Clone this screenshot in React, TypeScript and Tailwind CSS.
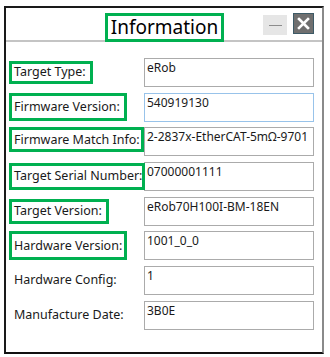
const font = { fontFamily: '"Noto Sans", "Open Sans", Arial, sans-serif' };

type Row = {
  label: string;
  value: string;
  box?: { w: number; h: number; dy?: number };
  focus?: boolean;
};

const rows: Row[] = [
  { label: "Target Type:", value: "eRob", box: { w: 84, h: 23 } },
  { label: "Firmware Version:", value: "540919130", box: { w: 118, h: 28 }, focus: true },
  { label: "Firmware Match Info:", value: "2-2837x-EtherCAT-5mΩ-9701", box: { w: 138, h: 25, dy: -2 } },
  { label: "Target Serial Number:", value: "07000001111", box: { w: 138, h: 27 } },
  { label: "Target Version:", value: "eRob70H100I-BM-18EN", box: { w: 100, h: 25 } },
  { label: "Hardware Version:", value: "1001_0_0", box: { w: 118, h: 29 } },
  { label: "Hardware Config:", value: "1" },
  { label: "Manufacture Date:", value: "3B0E" },
];

function App() {
  return (
    <div className="w-[330px] h-[357px] bg-white pt-[6px] pl-[4px]" style={font}>
      <div className="w-[320px] h-[348px] border-l-2 border-l-[#1a1a1a] border-t-2 border-t-[#1a1a1a] border-b-2 border-b-[#111] border-r-2 border-r-[#8a8a8a] flex flex-col">
        {/* title bar */}
        <div className="h-[34px] border-b-2 border-b-[#c4c4c4] flex items-start">
          <div className="ml-[99px] mt-[5px] w-[119px] h-[29px] border-[3px] border-[#00b050] flex items-center justify-center text-[19px] leading-none text-black">
            Information
          </div>
          <div className="ml-[39px] mt-[7px] w-[24px] h-[20px] bg-[#e6e6e6] flex items-center justify-center">
            <div className="w-[13px] h-[1px] bg-[#8c8c8c]" />
          </div>
          <div className="ml-[6px] mt-[5px] w-[21px] h-[21px] bg-[#6f6f6f] border border-[#3d5a66] flex items-center justify-center">
            <svg width="13" height="13" viewBox="0 0 13 13">
              <path d="M2 2 L11 11 M11 2 L2 11" stroke="white" strokeWidth="2.6" strokeLinecap="square" />
            </svg>
          </div>
        </div>

        {/* fields */}
        <div className="pt-[16px] flex flex-col">
          {rows.map((row) => (
            <div key={row.label} className="h-[34.7px] flex items-start">
              <div className="w-[138px] h-[29px] flex items-center relative z-10">
                {row.box ? (
                  <div
                    className="ml-[3px] border-[3px] border-[#00b050] flex items-center pl-[2px] text-[12.5px] text-[#1a1a1a] whitespace-nowrap"
                    style={{ width: row.box.w, height: row.box.h, marginTop: (row.box.dy ?? 0) * 2 }}
                  >
                    {row.label}
                  </div>
                ) : (
                  <div className="ml-[8px] text-[12.5px] text-[#1a1a1a] whitespace-nowrap">{row.label}</div>
                )}
              </div>
              <div
                className={
                  row.focus
                    ? "w-[170px] h-[29px] border border-[#98c3ea] bg-white pl-[2px] pt-[1px] text-[12px] leading-[16px] text-[#1a1a1a] whitespace-nowrap overflow-hidden"
                    : "w-[170px] h-[29px] border border-[#ababab] bg-white pl-[2px] pt-[1px] text-[12px] leading-[16px] text-[#1a1a1a] whitespace-nowrap overflow-hidden"
                }
              >
                {row.value}
              </div>
            </div>
          ))}
        </div>
      </div>
    </div>
  );
}

export default App;
